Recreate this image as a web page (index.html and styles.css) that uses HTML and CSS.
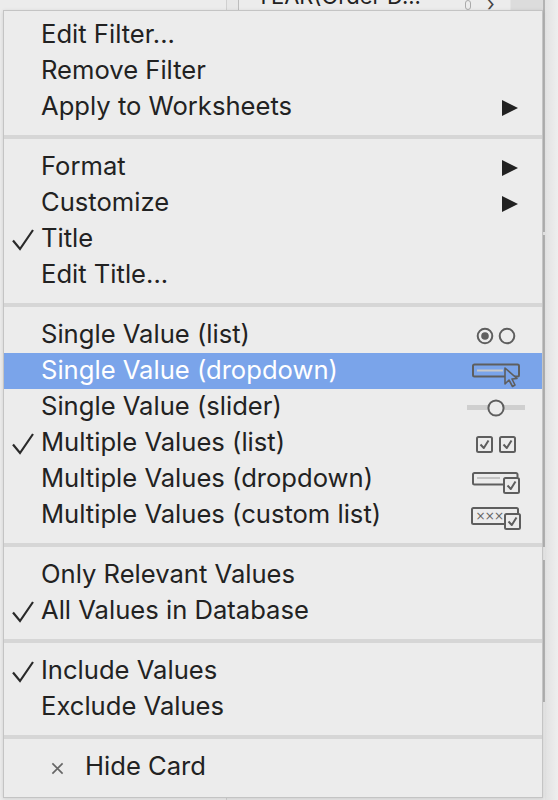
FILE: index.html
```html
<!DOCTYPE html>
<html>
<head>
<meta charset="utf-8">
<link rel="stylesheet" href="styles.css">
</head>
<body>
<div class="desk">
  <div class="main">
    <div class="gutter"></div>
    <div class="panels">
      <div class="panel p1">
        <div class="field-row">
          <span class="field-name">YEAR(Order D...</span>
          <span class="pill"></span>
          <span class="chev">›</span>
        </div>
      </div>
      <div class="panel p2"></div>
      <div class="panel p3"></div>
    </div>
  </div>
  <div class="side"></div>
</div>

<div class="menu">
  <div class="group">
    <div class="item"><span class="label">Edit Filter...</span></div>
    <div class="item"><span class="label">Remove Filter</span></div>
    <div class="item"><span class="label">Apply to Worksheets</span><span class="arrow"></span></div>
  </div>
  <div class="sep"></div>
  <div class="group">
    <div class="item"><span class="label">Format</span><span class="arrow"></span></div>
    <div class="item"><span class="label">Customize</span><span class="arrow"></span></div>
    <div class="item"><svg class="check" viewBox="0 0 22 22"><path d="M1 11.5 L8 20 L21 1"/></svg><span class="label">Title</span></div>
    <div class="item"><span class="label">Edit Title...</span></div>
  </div>
  <div class="sep"></div>
  <div class="group">
    <div class="item"><span class="label">Single Value (list)</span>
      <svg class="icon" width="64" height="24" viewBox="0 0 64 24"><circle cx="19" cy="13" r="7.3" class="st"/><circle cx="19" cy="13" r="3.8" class="fl"/><circle cx="41" cy="13" r="7.3" class="st"/></svg>
    </div>
    <div class="item active"><span class="label">Single Value (dropdown)</span>
      <svg class="icon" width="64" height="24" viewBox="0 0 64 24"><rect x="7" y="5.5" width="46" height="12" rx="1.5" class="st"/><line x1="11" y1="11.5" x2="37" y2="11.5" class="ln"/><path d="M39 9 L39 25 L43 21 L46.5 27.5 L49 26 L46 20 L51 19.5 Z" class="cur"/></svg>
    </div>
    <div class="item"><span class="label">Single Value (slider)</span>
      <svg class="icon" width="64" height="24" viewBox="0 0 64 24"><rect x="1" y="10" width="58" height="5" class="trk"/><circle cx="30" cy="13" r="7.6" class="st knob"/></svg>
    </div>
    <div class="item"><svg class="check" viewBox="0 0 22 22"><path d="M1 11.5 L8 20 L21 1"/></svg><span class="label">Multiple Values (list)</span>
      <svg class="icon" width="64" height="24" viewBox="0 0 64 24"><rect x="11" y="6" width="15" height="15" rx="1.5" class="st"/><path d="M14.5 13.5 L17.8 17 L22.5 9.5" class="ck"/><rect x="34" y="6" width="15" height="15" rx="1.5" class="st"/><path d="M37.5 13.5 L40.8 17 L45.5 9.5" class="ck"/></svg>
    </div>
    <div class="item"><span class="label">Multiple Values (dropdown)</span>
      <svg class="icon" width="64" height="24" viewBox="0 0 64 24"><path d="M38 17.5 H8.5 a1.5 1.5 0 0 1 -1.5 -1.5 V7.5 a1.5 1.5 0 0 1 1.5 -1.5 H50 a1.5 1.5 0 0 1 1.5 1.5 V10" class="st"/><line x1="11" y1="11" x2="34" y2="11" class="ln2"/><rect x="38" y="11" width="15" height="15" rx="1.5" class="st fillbg"/><path d="M41.5 18.5 L44.8 22 L49.5 14.5" class="ck"/></svg>
    </div>
    <div class="item"><span class="label">Multiple Values (custom list)</span>
      <svg class="icon" width="64" height="24" viewBox="0 0 64 24"><path d="M39 21 H7.5 a1.5 1.5 0 0 1 -1.5 -1.5 V6.5 a1.5 1.5 0 0 1 1.5 -1.5 H50.5 a1.5 1.5 0 0 1 1.5 1.5 V10" class="st"/><text x="9.5" y="17" class="xxx">×××</text><rect x="39" y="11" width="15" height="15" rx="1.5" class="st fillbg"/><path d="M42.5 18.5 L45.8 22 L50.5 14.5" class="ck"/></svg>
    </div>
  </div>
  <div class="sep"></div>
  <div class="group">
    <div class="item"><span class="label">Only Relevant Values</span></div>
    <div class="item"><svg class="check" viewBox="0 0 22 22"><path d="M1 11.5 L8 20 L21 1"/></svg><span class="label">All Values in Database</span></div>
  </div>
  <div class="sep"></div>
  <div class="group">
    <div class="item"><svg class="check" viewBox="0 0 22 22"><path d="M1 11.5 L8 20 L21 1"/></svg><span class="label">Include Values</span></div>
    <div class="item"><span class="label">Exclude Values</span></div>
  </div>
  <div class="sep"></div>
  <div class="group">
    <div class="item hide"><svg class="xmark" viewBox="0 0 14 14"><path d="M1.5 1.5 L12.5 12.5 M12.5 1.5 L1.5 12.5"/></svg><span class="label">Hide Card</span></div>
  </div>
</div>
</body>
</html>
```

FILE: styles.css
```css
html, body {
  margin: 0;
  padding: 0;
}
body {
  width: 558px;
  height: 800px;
  overflow: hidden;
  position: relative;
  background: #e8e8e8;
  font-family: "Inter", "Liberation Sans", sans-serif;
}

/* background app */
.desk {
  display: flex;
  height: 800px;
}
.main {
  display: flex;
  width: 545px;
}
.gutter {
  width: 226px;
  border-right: 1px solid #d0d0d0;
  background: #ececec;
}
.panels {
  flex: 1;
  display: flex;
  flex-direction: column;
}
.panel {
  border-left: 1px solid #bdbdbd;
  border-right: 2px solid #b3b3b3;
  background: #ececec;
  margin-left: 11px;
}
.p1 { height: 232px; }
.p2 { height: 312px; margin-top: 3px; }
.p3 { height: 142px; margin-top: 13px; }
.field-row {
  display: flex;
  align-items: flex-end;
  height: 10px;
  overflow: hidden;
  background: linear-gradient(to right, #ececec 0, #ececec 271px, #dcdcdc 272px);
}
.field-name {
  font-size: 22px;
  line-height: 22px;
  color: #222;
  margin-left: 17px;
  margin-bottom: 3px;
  white-space: nowrap;
}
.pill {
  width: 4px;
  height: 8px;
  border: 1px solid #aaa;
  border-radius: 3px;
  margin-left: 44px;
}
.chev {
  font-size: 20px;
  color: #444;
  margin-left: 16px;
  line-height: 12px;
}
.side {
  flex: 1;
  background: linear-gradient(to right, #e2e2e2, #eeeeee);
}

/* menu */
.menu {
  position: absolute;
  left: 3px;
  top: 10px;
  width: 540px;
  height: 788px;
  box-sizing: border-box;
  background: #ececec;
  border: 1px solid #c4c4c4;
  padding-top: 6px;
  box-shadow: 0 1px 4px rgba(0,0,0,0.12);
}
.group {
  display: flex;
  flex-direction: column;
}
.item {
  position: relative;
  box-sizing: border-box;
  height: 36px;
  display: flex;
  align-items: center;
  padding-left: 37px;
  padding-right: 22px;
  color: #222;
  font-size: 25.6px;
}
.item .label {
  flex: 1;
  white-space: nowrap;
  padding-bottom: 3px;
}
.item.active {
  background: #7aa4ea;
  color: #fff;
}
.sep {
  height: 4px;
  margin: 10px 0;
  background: #d6d6d6;
}
.arrow {
  width: 0;
  height: 0;
  border-top: 8.5px solid transparent;
  border-bottom: 8.5px solid transparent;
  border-left: 16px solid #222;
  margin-right: 2px;
  margin-top: 2px;
}
.check {
  position: absolute;
  left: 8px;
  top: 8px;
  width: 22px;
  height: 22px;
  overflow: visible;
}
.check path {
  fill: none;
  stroke: #2a2a2a;
  stroke-width: 2.2;
}
.xmark {
  position: absolute;
  left: 47px;
  top: 13px;
  width: 13px;
  height: 13px;
}
.xmark path {
  fill: none;
  stroke: #666;
  stroke-width: 1.8;
}
.item.hide {
  padding-left: 81px;
}
.icon {
  margin-right: -10px;
  overflow: visible;
}
.st {
  fill: none;
  stroke: #5e5e5e;
  stroke-width: 2;
}
.fillbg { fill: #ececec; }
.fl { fill: #5e5e5e; }
.ln {
  stroke: #c8c8c8;
  stroke-width: 2;
}
.ln2 {
  stroke: #c4c4c4;
  stroke-width: 2;
}
.cur {
  fill: #7aa4ea;
  stroke: #5e5e5e;
  stroke-width: 1.6;
  stroke-linejoin: round;
}
.trk { fill: #cfcfcf; }
.knob { fill: #ececec; }
.ck {
  fill: none;
  stroke: #5e5e5e;
  stroke-width: 2;
  stroke-linejoin: round;
}
.xxx {
  font-family: "DejaVu Sans", sans-serif;
  font-size: 12px;
  fill: #666;
  letter-spacing: -0.8px;
}
```
